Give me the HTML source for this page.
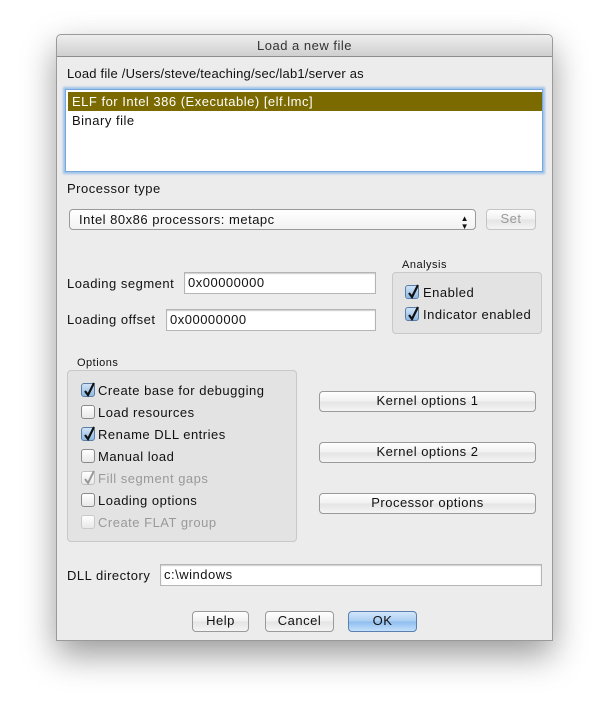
<!DOCTYPE html>
<html><head><style>
*{margin:0;padding:0;box-sizing:border-box}
body{width:609px;height:720px;background:#fff;position:relative;overflow:hidden;font-family:"Liberation Sans",sans-serif;font-size:13px;color:#111;letter-spacing:.5px}
.win{position:absolute;left:56px;top:34px;width:497px;height:607px;background:#ececec;border:1px solid #9a9a9a;border-radius:5px 5px 0 0;box-shadow:0 14px 34px rgba(0,0,0,.4)}
.title{position:absolute;left:0;top:0;width:100%;height:22px;background:linear-gradient(#eeeeee,#cfcfcf);border-bottom:1px solid #8c8c8c;border-radius:5px 5px 0 0;text-align:center;line-height:22px;color:#333}
.a{position:absolute;white-space:nowrap}
.inp{position:absolute;background:#fff;border:1px solid #b5b5b5;box-shadow:inset 0 1px 1px #ccc;padding-left:3px;line-height:19px}
.grp{position:absolute;background:#e3e3e3;border:1px solid #c8c8c8;border-radius:4px}
.btn{position:absolute;border:1px solid #9a9a9a;border-radius:4px;background:linear-gradient(#ffffff,#f0f0f0 50%,#e4e4e4 51%,#f4f4f4);text-align:center;line-height:18px}
.cb{position:absolute;width:14px;height:14px;border:1px solid #8a8a8a;border-radius:3px;background:linear-gradient(#fff,#e8e8e8)}
.cb.on{background:linear-gradient(#cfe3f7,#8fb9e2);border-color:#5a7ea6}
.cb svg{position:absolute;left:0;top:-4px}
.dis{color:#999}
</style></head><body>
<div class="win">
<div class="title">Load a new file</div>
</div>
<div class="a" style="left:67px;top:66px;letter-spacing:.2px">Load file /Users/steve/teaching/sec/lab1/server as</div>
<div style="position:absolute;left:65px;top:89px;width:478px;height:83px;background:#fff;border:1px solid #7aa7d9;box-shadow:0 0 2px 2px #9cc3ec"></div>
<div class="a" style="left:68px;top:92px;width:474px;height:19px;background:#7b6a00;color:#fff;padding-left:4px;line-height:19px">ELF for Intel 386 (Executable) [elf.lmc]</div>
<div class="a" style="left:72px;top:111px;line-height:19px">Binary file</div>
<div class="a" style="left:67px;top:181px">Processor type</div>
<div class="btn" style="left:69px;top:209px;width:407px;height:21px;text-align:left;padding-left:9px;line-height:19px;border-radius:4px;background:linear-gradient(#fff,#f2f2f2)">Intel 80x86 processors: metapc<span style="position:absolute;right:6px;top:0;font-size:8px;line-height:8px;top:5px">▲<br>▼</span></div>
<div class="btn dis" style="left:486px;top:209px;width:50px;height:21px;border-color:#c4c4c4">Set</div>
<div class="a" style="left:67px;top:276px">Loading segment</div>
<div class="inp" style="left:184px;top:272px;width:192px;height:22px">0x00000000</div>
<div class="a" style="left:67px;top:312px">Loading offset</div>
<div class="inp" style="left:166px;top:309px;width:210px;height:22px">0x00000000</div>
<div class="a" style="left:402px;top:259px;font-size:11px">Analysis</div>
<div class="grp" style="left:392px;top:272px;width:150px;height:62px"></div>
<div class="cb on" style="left:405px;top:285px"><svg width="16" height="18"><path d="M3 11 L6 15 L12 3" stroke="#111" stroke-width="2.2" fill="none"/></svg></div>
<div class="a" style="left:423px;top:285px">Enabled</div>
<div class="cb on" style="left:405px;top:307px"><svg width="16" height="18"><path d="M3 11 L6 15 L12 3" stroke="#111" stroke-width="2.2" fill="none"/></svg></div>
<div class="a" style="left:423px;top:307px">Indicator enabled</div>
<div class="a" style="left:77px;top:357px;font-size:11px">Options</div>
<div class="grp" style="left:67px;top:370px;width:230px;height:172px"></div>
<div class="cb on" style="left:81px;top:383px"><svg width="16" height="18"><path d="M3 11 L6 15 L12 3" stroke="#111" stroke-width="2.2" fill="none"/></svg></div>
<div class="a" style="left:98px;top:383px">Create base for debugging</div>
<div class="cb" style="left:81px;top:405px"></div>
<div class="a" style="left:98px;top:405px">Load resources</div>
<div class="cb on" style="left:81px;top:427px"><svg width="16" height="18"><path d="M3 11 L6 15 L12 3" stroke="#111" stroke-width="2.2" fill="none"/></svg></div>
<div class="a" style="left:98px;top:427px">Rename DLL entries</div>
<div class="cb" style="left:81px;top:449px"></div>
<div class="a" style="left:98px;top:449px">Manual load</div>
<div class="cb" style="left:81px;top:471px;border-color:#c0c0c0"><svg width="16" height="18"><path d="M3 11 L6 15 L12 3" stroke="#999" stroke-width="2" fill="none"/></svg></div>
<div class="a dis" style="left:98px;top:471px">Fill segment gaps</div>
<div class="cb" style="left:81px;top:493px"></div>
<div class="a" style="left:98px;top:493px">Loading options</div>
<div class="cb" style="left:81px;top:515px;border-color:#c8c8c8"></div>
<div class="a dis" style="left:98px;top:515px">Create FLAT group</div>
<div class="btn" style="left:319px;top:391px;width:217px;height:21px">Kernel options 1</div>
<div class="btn" style="left:319px;top:442px;width:217px;height:21px">Kernel options 2</div>
<div class="btn" style="left:319px;top:493px;width:217px;height:21px">Processor options</div>
<div class="a" style="left:67px;top:568px">DLL directory</div>
<div class="inp" style="left:160px;top:564px;width:382px;height:22px">c:\windows</div>
<div class="btn" style="left:192px;top:611px;width:57px;height:21px">Help</div>
<div class="btn" style="left:265px;top:611px;width:69px;height:21px">Cancel</div>
<div class="btn" style="left:348px;top:611px;width:69px;height:21px;border-color:#5a7fb0;background:linear-gradient(#d4e6fa,#a9cdf3 50%,#8ebdf0 51%,#c4e0fb)">OK</div>
</body></html>
